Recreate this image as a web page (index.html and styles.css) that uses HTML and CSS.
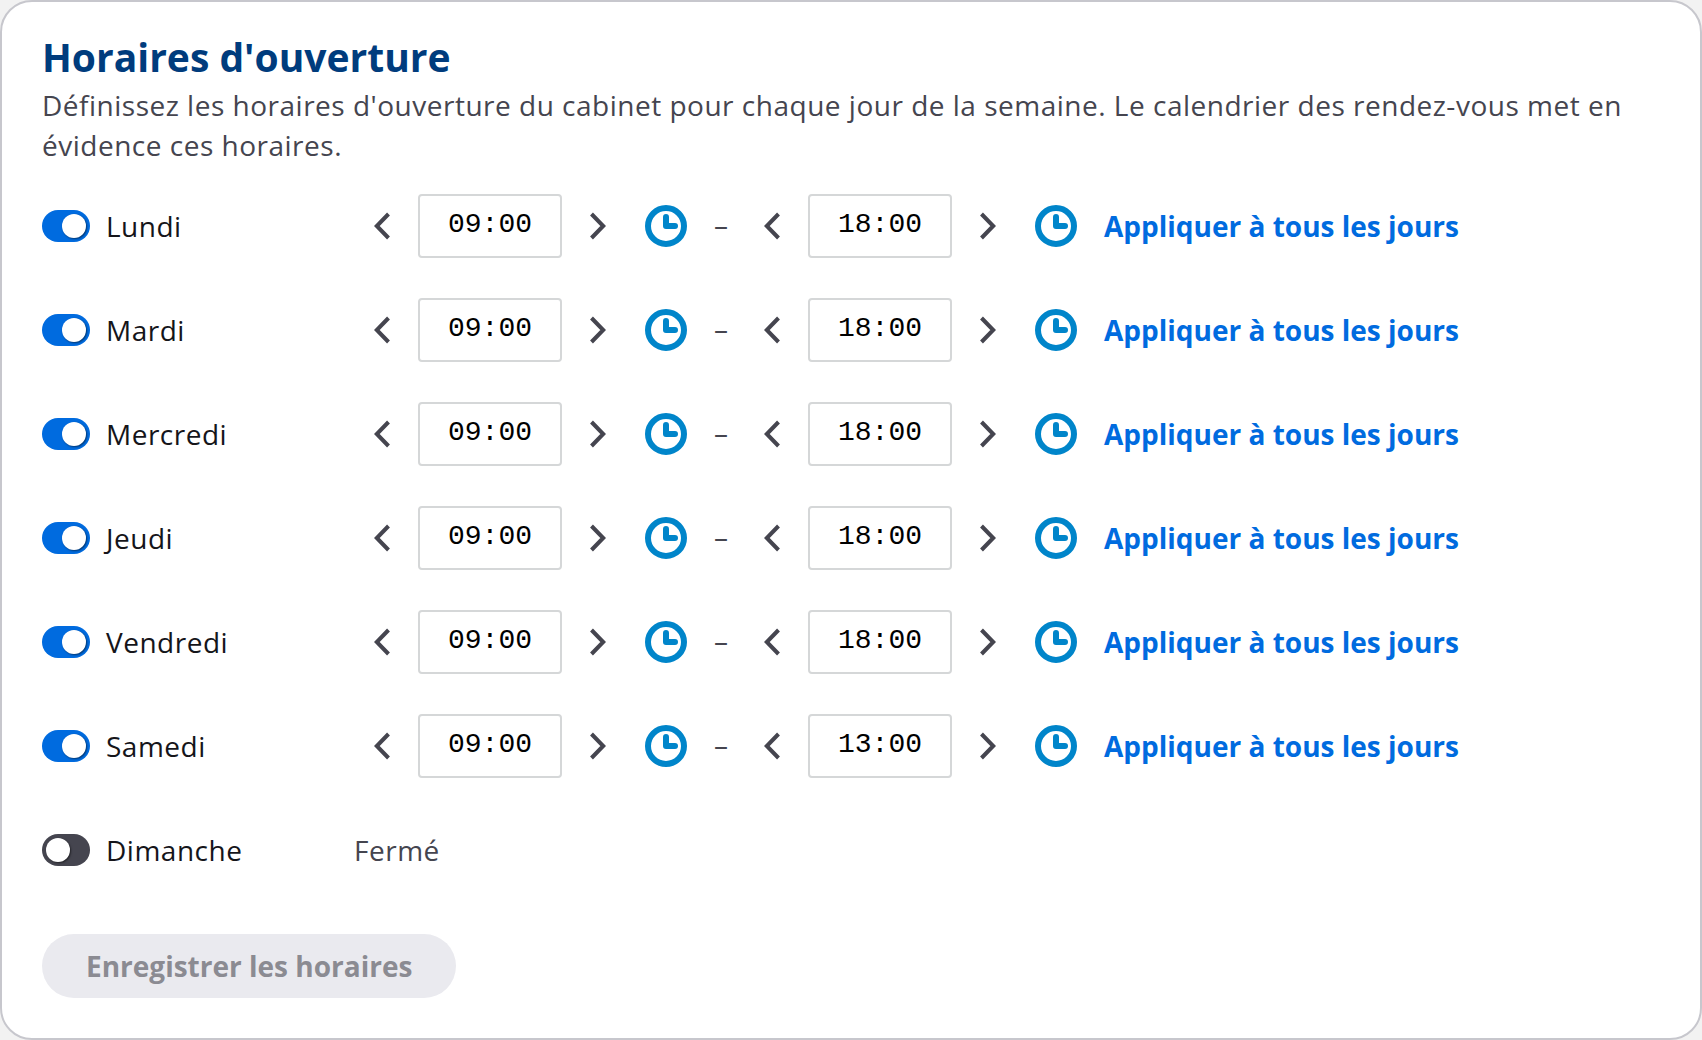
FILE: index.html
```html
<!DOCTYPE html>
<html lang="fr"><head><meta charset="utf-8"><title>Horaires d'ouverture</title><link rel="stylesheet" href="styles.css"></head>
<body>
<svg class="sprite" aria-hidden="true">
<symbol id="prev" viewBox="0 0 16 28"><path d="M14.500 2 2.800 14l11.700 12" fill="none" stroke="currentColor" stroke-width="4"/></symbol>
<symbol id="next" viewBox="0 0 16 28"><path d="M1.500 2l11.700 12L1.500 26" fill="none" stroke="currentColor" stroke-width="4"/></symbol>
<symbol id="clock" viewBox="0 0 42 42"><circle cx="21" cy="21" r="18" fill="none" stroke="currentColor" stroke-width="6"/><path d="M21 12v9h9" fill="none" stroke="currentColor" stroke-width="6" stroke-linecap="round" stroke-linejoin="round"/></symbol>
</svg>
<form class="card">
<h1 class="title">Horaires d'ouverture</h1>
<p class="intro">Définissez les horaires d'ouverture du cabinet pour chaque jour de la semaine. Le calendrier des rendez-vous met en évidence ces horaires.</p>
<div class="days" id="days"></div>
<button class="save" type="submit" disabled>Enregistrer les horaires</button>
</form>
<script src="days.js"></script>
</body></html>
```
FILE: days.js
```js
const days = [
  ["Lundi", "09:00", "18:00"], ["Mardi", "09:00", "18:00"], ["Mercredi", "09:00", "18:00"],
  ["Jeudi", "09:00", "18:00"], ["Vendredi", "09:00", "18:00"], ["Samedi", "09:00", "13:00"], ["Dimanche"]
];
const picker = (label, value) => `<div class="picker">
  <button type="button" class="step" aria-label="Plus tôt"><svg class="chevron"><use href="#prev"/></svg></button>
  <input class="time" type="text" aria-label="${label}" value="${value}">
  <button type="button" class="step" aria-label="Plus tard"><svg class="chevron"><use href="#next"/></svg></button>
  <button type="button" class="clock-button" aria-label="Choisir l'heure"><svg class="clock"><use href="#clock"/></svg></button>
</div>`;
document.getElementById("days").innerHTML = days.map(([day, start, end]) => `<div class="day">
  <label class="toggle"><input class="switch" type="checkbox" role="switch" ${start ? "checked" : ""}>${day}</label>
  ${start ? `${picker(day + ", ouverture", start)}<span class="dash">–</span>${picker(day + ", fermeture", end)}
  <button type="button" class="apply">Appliquer à tous les jours</button>` : `<span class="closed">Fermé</span>`}
</div>`).join("");
```
FILE: styles.css
```css
* { box-sizing: border-box; }
html { background: #f2f2f2; }
body { margin: 0; font: 28px/40px "Open Sans", sans-serif; color: #15151a; }
.sprite { display: none; }
.card { min-height: 100vh; padding: 31px 40px 40px; border: 2px solid #c7c7cd; border-radius: 32px; background: #fff; }
.title { margin: 0; font-size: 39px; line-height: 48px; color: #003c7d; }
.intro { margin: 0; padding-top: 4px; color: #45454f; letter-spacing: 0.018em; }
.days { display: grid; gap: 40px; margin-top: 29px; }
.day { display: flex; align-items: center; height: 64px; }
.toggle { display: flex; align-items: center; gap: 16px; width: 312px; letter-spacing: 0.018em; }
.switch { appearance: none; width: 48px; height: 32px; margin: 0; border-radius: 16px; background: #45454f; }
.switch::before { content: ""; display: block; width: 24px; height: 24px; margin: 4px; border-radius: 50%; background: #fff; box-shadow: 1px 1px 2px rgb(0 0 0 / 50%); }
.switch:checked { background: #006bdf; }
.switch:checked::before { margin-left: 20px; }
button { border: 0; padding: 0; background: none; font: inherit; }
.picker { display: flex; align-items: center; }
.step { display: grid; place-items: center; width: 56px; height: 56px; color: #45454f; }
.chevron { width: 16px; height: 28px; }
.time { width: 144px; height: 64px; margin: 0 8px; padding: 0 0 4px; border: 2px solid #d5d7d8; border-radius: 4px; text-align: center; font: 28px "Liberation Mono", monospace; color: #000; }
.clock-button { display: grid; place-items: center; width: 64px; height: 64px; margin-left: 8px; color: #0085ca; }
.clock { width: 42px; height: 42px; }
.dash { width: 46px; padding-bottom: 4px; text-align: center; color: #45454f; }
.apply { margin-left: 16px; font-weight: 700; color: #006bdf; }
.closed { color: #45454f; letter-spacing: 0.018em; }
.save { height: 64px; margin-top: 52px; padding: 0 44px; border-radius: 32px; background: #eaeaef; color: #8b8b92; font-weight: 700; }
```
